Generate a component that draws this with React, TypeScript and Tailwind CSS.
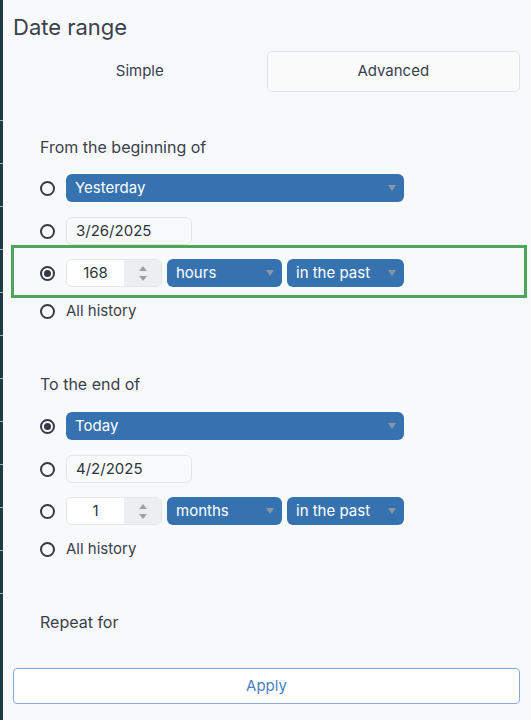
import React, { useState } from 'react';

const ticks = Array.from({ length: 12 });

const Radio = ({ checked, onClick }: { checked?: boolean; onClick?: () => void }) => (
  <button
    type="button"
    onClick={onClick}
    className="flex h-[15px] w-[15px] shrink-0 items-center justify-center rounded-full border-2 border-[#353b46]"
  >
    {checked && <span className="h-[7px] w-[7px] rounded-full bg-[#353b46]" />}
  </button>
);

const Select = ({ value, width }: { value: string; width: string }) => (
  <div
    className={`flex h-[28px] items-center justify-between rounded-[6px] bg-[#3672b0] pl-[9px] pr-[8px] text-[15px] text-white ${width}`}
  >
    <span>{value}</span>
    <svg width="8" height="6" viewBox="0 0 8 6">
      <path d="M0 0h8L4 6z" fill="#8c96a3" />
    </svg>
  </div>
);

const NumberInput = ({ value }: { value: string }) => (
  <div className="flex h-[28px] w-[96px] overflow-hidden rounded-[6px] border border-[#e3e5e8]">
    <div className="flex w-[57px] items-center justify-center bg-white text-[15px] text-[#2f3540]">{value}</div>
    <div className="flex flex-1 flex-col items-center justify-center gap-[5px] bg-[#eceef0]">
      <svg width="8" height="5" viewBox="0 0 8 5">
        <path d="M4 0l4 5H0z" fill="#9aa1aa" />
      </svg>
      <svg width="8" height="5" viewBox="0 0 8 5">
        <path d="M0 0h8L4 5z" fill="#9aa1aa" />
      </svg>
    </div>
  </div>
);

const DateInput = ({ value }: { value: string }) => (
  <div className="flex h-[28px] w-[126px] items-center rounded-[6px] border border-[#e3e5e8] bg-[#f9fafb] pl-[9px] text-[15px] text-[#2f3540]">
    {value}
  </div>
);

const Row = ({ children, className = '' }: { children: React.ReactNode; className?: string }) => (
  <div className={`flex items-center gap-[11px] pl-[27px] ${className}`}>{children}</div>
);

export default function App() {
  const [tab, setTab] = useState<'simple' | 'advanced'>('simple');
  const [from, setFrom] = useState(2);
  const [to, setTo] = useState(0);

  return (
    <div
      className="flex min-h-[720px] w-[531px] bg-[#f8f9fa] text-[#3a404c]"
      style={{ fontFamily: 'Inter, "Liberation Sans", sans-serif' }}
    >
      {/* left edge of the neighbouring panel */}
      <div className="w-[3px] shrink-0 bg-[#1e3b42] pt-[120px]">
        {ticks.map((_, i) => (
          <div key={i} className="h-[43px] border-t border-[#9fb3b8]" />
        ))}
      </div>

      <div className="flex-1 pl-[10px] pr-[8px]">
        <h2 className="pt-[13px] text-[22px] leading-[28px] text-[#3a404c]">Date range</h2>

        <div className="mt-[10px] grid h-[41px] grid-cols-2 pr-[3px] text-[15px]">
          <button
            onClick={() => setTab('simple')}
            className={`rounded-[5px] ${tab === 'simple' ? '' : 'border border-[#e1e4e8] bg-[#fbfbfc]'}`}
          >
            Simple
          </button>
          <button
            onClick={() => setTab('advanced')}
            className={`rounded-[5px] ${tab === 'advanced' ? '' : 'border border-[#e1e4e8] bg-[#fbfbfc]'}`}
          >
            Advanced
          </button>
        </div>

        <div className="mt-[45px] pl-[27px] text-[16px] leading-[20px]">From the beginning of</div>

        <Row className="mt-[17px]">
          <Radio checked={from === 0} onClick={() => setFrom(0)} />
          <Select value="Yesterday" width="w-[338px]" />
        </Row>
        <Row className="mt-[15px]">
          <Radio checked={from === 1} onClick={() => setFrom(1)} />
          <DateInput value="3/26/2025" />
        </Row>

        <div className="-ml-[2px] -mr-[4px] border-[3px] border-[#4ca659] pb-[8px] pt-[11px]">
          <div className="flex items-center gap-[11px] pl-[26px]">
            <Radio checked={from === 2} onClick={() => setFrom(2)} />
            <div className="flex items-center gap-[5px]">
              <NumberInput value="168" />
              <Select value="hours" width="w-[115px]" />
              <Select value="in the past" width="w-[117px]" />
            </div>
          </div>
        </div>

        <Row className="mt-[3px] h-[20px]">
          <Radio checked={from === 3} onClick={() => setFrom(3)} />
          <span className="text-[15px]">All history</span>
        </Row>

        <div className="mt-[53px] pl-[27px] text-[16px] leading-[20px]">To the end of</div>

        <Row className="mt-[18px]">
          <Radio checked={to === 0} onClick={() => setTo(0)} />
          <Select value="Today" width="w-[338px]" />
        </Row>
        <Row className="mt-[15px]">
          <Radio checked={to === 1} onClick={() => setTo(1)} />
          <DateInput value="4/2/2025" />
        </Row>
        <Row className="mt-[14px]">
          <Radio checked={to === 2} onClick={() => setTo(2)} />
          <div className="flex items-center gap-[5px]">
            <NumberInput value="1" />
            <Select value="months" width="w-[115px]" />
            <Select value="in the past" width="w-[117px]" />
          </div>
        </Row>
        <Row className="mt-[14px] h-[20px]">
          <Radio checked={to === 3} onClick={() => setTo(3)} />
          <span className="text-[15px]">All history</span>
        </Row>

        <div className="mt-[53px] pl-[27px] text-[16px] leading-[20px]">Repeat for</div>

        <button className="mt-[36px] mr-[3px] flex h-[36px] w-[507px] items-center justify-center rounded-[4px] border border-[#86abd8] bg-white text-[15px] text-[#4a80c2]">
          Apply
        </button>
      </div>
    </div>
  );
}
